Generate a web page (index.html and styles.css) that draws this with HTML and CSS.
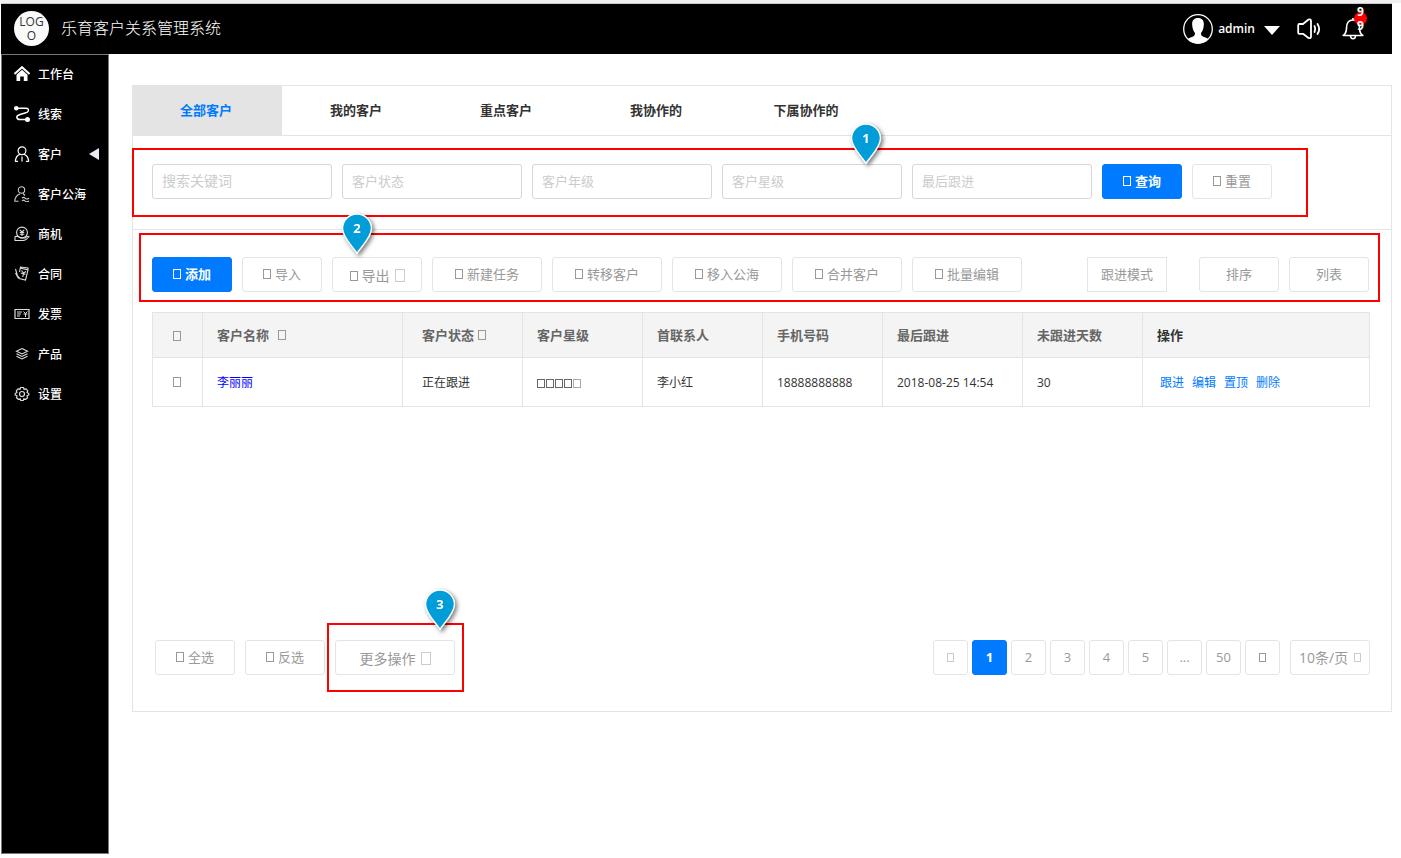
FILE: index.html
```html
<!DOCTYPE html>
<html lang="zh-CN">
<head>
<meta charset="utf-8">
<title>乐育客户关系管理系统</title>
<link rel="stylesheet" href="styles.css">
</head>
<body>
<svg class="defs" aria-hidden="true">
  <symbol id="pin" viewBox="0 0 32 42">
    <path d="M16 40.500 C13.500 35.500 1.500 25 1.500 15.500 A14.500 14.500 0 0 1 30.500 15.500 C30.500 25 18.500 35.500 16 40.500 Z" fill="#009dd9" stroke="#fff" stroke-width="1.500"/>
  </symbol>
</svg>

<header class="topbar">
  <span class="logo">LOGO</span>
  <h1 class="title">乐育客户关系管理系统</h1>
  <div class="userbar">
    <button class="user" type="button">
      <svg width="30" height="30" viewBox="0 0 30 30"><circle cx="15" cy="15" r="14.300" fill="#000" stroke="#fff" stroke-width="1.300"/><path d="M15 4 C10.500 4 8.800 7 9.200 11 C9.400 15 10.800 17.500 12 19 C12 21 11.500 22.200 9 23 C7 23.700 5.500 24.200 4.600 25 A14.300 14.300 0 0 0 25.400 25 C24.500 24.200 23 23.700 21 23 C18.500 22.200 18 21 18 19 C19.200 17.500 20.600 15 20.800 11 C21.200 7 19.500 4 15 4 Z" fill="#fff"/></svg>
      <span>admin</span>
      <svg class="caret" width="16" height="9" viewBox="0 0 16 9"><path d="M0 0 H16 L8 9 Z" fill="#fff"/></svg>
    </button>
    <button class="plain" type="button" aria-label="声音">
      <svg width="24" height="22" viewBox="0 0 24 22" fill="none" stroke="#fff" stroke-width="1.800" stroke-linejoin="round" stroke-linecap="round"><path d="M2.300 6 H6 L11.500 1.500 Q14 .8 14 3 V18.500 Q14 20.800 11.500 20 L6 15.800 H2.300 Q1.200 15.800 1.200 14.500 V7.300 Q1.200 6 2.300 6 Z"/><path d="M17.500 8 Q19 11 17.500 14"/><path d="M20.500 6 Q23.800 11 20.500 16"/></svg>
    </button>
    <button class="plain bell" type="button" aria-label="通知">
      <svg width="22" height="24" viewBox="0 0 22 24" fill="none" stroke="#fff" stroke-width="1.600" stroke-linejoin="round"><path d="M11 1 V3 M1.200 18.500 C4 16.500 4.500 14.500 4.500 11 C4.500 6 7 3 11 3 C15 3 17.500 6 17.500 11 C17.500 14.500 18 16.500 20.800 18.500 Z"/><path d="M8.500 19 Q8.800 21.800 11 21.800 Q13.200 21.800 13.500 19"/></svg>
      <span class="badge">99</span>
    </button>
  </div>
</header>

<div class="layout">
  <nav class="sidebar">
    <a href="#"><svg viewBox="0 0 16 16"><path d="M.5 8 L8 1.200 L15.500 8" fill="none" stroke="#fff" stroke-width="2"/><path d="M2.500 8.700 L8 3.800 L13.500 8.700 V15 H9.800 V10.500 H6.200 V15 H2.500 Z" fill="#fff"/></svg>工作台</a>
    <a href="#"><svg viewBox="0 0 16 16" fill="none" stroke="#fff" stroke-width="1.400"><circle cx="2.300" cy="2.300" r="2.300" fill="#fff" stroke="none"/><circle cx="13.500" cy="13.500" r="2.500" fill="#fff" stroke="none"/><path d="M3 2.300 H12 Q15 2.500 14.300 5 Q13.800 6.500 11 7 L6 8.500 Q2.500 9.500 2.800 11.500 Q3.200 13.500 6 13.500 H12"/></svg>线索</a>
    <a href="#" class="current"><svg viewBox="0 0 16 16" fill="none" stroke="#fff" stroke-width="1.200"><circle cx="8" cy="4.800" r="3.900"/><path d="M1.300 15.500 Q1.800 9.500 6 8.300 M14.700 15.500 Q14.200 9.500 10 8.300 M4 15.300 H1.200 M12 15.300 H14.800 M8 10.500 V15.500"/></svg>客户<i class="arrow"></i></a>
    <a href="#"><svg viewBox="0 0 16 16" fill="none" stroke="#ccc" stroke-width="1.100"><circle cx="7.500" cy="4" r="3.200"/><path d="M.8 15.500 Q1 9.500 6 8 M.5 15.300 H4.500 M9 7.500 L11 9.500"/><path d="M8 12.200 Q9.500 10.500 11 12.200 T15 12.200 M8 15 Q9.500 13.300 11 15 T15 15"/></svg>客户公海</a>
    <a href="#"><svg viewBox="0 0 16 16" fill="none" stroke="#ddd" stroke-width="1.100"><circle cx="8" cy="6.500" r="5.400"/><path d="M5.800 4 L8 6 L10.200 4 M5.800 6.500 H10.200 M5.800 8.300 H10.200 M8 6 V10"/><path d="M1 10.500 V14.500 H9 Q12 14.500 15 10.500 Q13.500 9.500 11 12 H6.500 Q5 10 1 10.500"/></svg>商机</a>
    <a href="#"><svg viewBox="0 0 16 16" fill="none" stroke="#ddd" stroke-width="1.100"><path d="M6 2 L14 4 L11.500 14 L5 12.500 M14 4 V2 L6.500 1 L5.500 6"/><path d="M1.500 3 L3.500 10 L5.500 12 M1.500 7 L4.500 12.500 M7.500 4.500 L9.500 7 L12 5.500 M9.500 7 L8.800 11 M6.800 7 L11.500 8.200"/></svg>合同</a>
    <a href="#"><svg viewBox="0 0 16 16" fill="none" stroke="#ddd" stroke-width="1.200"><path d="M1 3.500 H15 V12.500 H1 Z"/><path d="M3 6 H8 M3 8 H7 M3 10 H6 M9.500 5.500 L11.500 7.500 L13.500 5.500 M9.500 8 H13.500 M11.500 7.500 V11" stroke-width="1"/></svg>发票</a>
    <a href="#"><svg viewBox="0 0 16 16" fill="none" stroke="#ddd" stroke-width="1.100"><path d="M8 2.500 L13.500 5.300 L8 8 L2.500 5.300 Z M2.500 7.800 L8 10.500 L13.500 7.800 M2.500 10.300 L8 13 L13.500 10.300"/></svg>产品</a>
    <a href="#"><svg viewBox="0 0 16 16" fill="none" stroke="#ddd" stroke-width="1.200" stroke-linejoin="round"><path d="M6.500 1.500 H9.500 L10 3.300 L12 2.800 L13.800 4.800 L13 6.500 L14.800 7.500 V9 L13 9.800 L13.500 11.800 L11.500 13.500 L9.900 12.700 L9.200 14.500 H6.800 L6.100 12.700 L4.500 13.500 L2.500 11.800 L3 9.800 L1.200 9 V7.500 L3 6.500 L2.200 4.800 L4 2.800 L6 3.300 Z"/><circle cx="8" cy="8" r="2.500"/></svg>设置</a>
  </nav>

  <main class="main">
    <section class="card">
      <div class="tabs" role="tablist">
        <button type="button" role="tab" class="tab active" aria-selected="true">全部客户</button>
        <button type="button" role="tab" class="tab">我的客户</button>
        <button type="button" role="tab" class="tab">重点客户</button>
        <button type="button" role="tab" class="tab">我协作的</button>
        <button type="button" role="tab" class="tab">下属协作的</button>
      </div>

      <form class="search">
        <input class="field keyword" type="text" placeholder="搜索关键词" aria-label="搜索关键词">
        <select class="field" aria-label="客户状态"><option>客户状态</option></select>
        <select class="field" aria-label="客户年级"><option>客户年级</option></select>
        <select class="field" aria-label="客户星级"><option>客户星级</option></select>
        <input class="field" type="text" placeholder="最后跟进" aria-label="最后跟进">
        <button type="button" class="btn primary"><i class="glyph"></i>查询</button>
        <button type="button" class="btn"><i class="glyph"></i>重置</button>
        <div class="mark mark-search"><span class="pin"><svg><use href="#pin"/></svg><b>1</b></span></div>
      </form>

      <div class="toolbar">
        <button type="button" class="btn primary"><i class="glyph"></i>添加</button>
        <button type="button" class="btn"><i class="glyph"></i>导入</button>
        <button type="button" class="btn export"><i class="glyph"></i>导出<i class="glyph big"></i></button>
        <button type="button" class="btn wide"><i class="glyph"></i>新建任务</button>
        <button type="button" class="btn wide"><i class="glyph"></i>转移客户</button>
        <button type="button" class="btn wide"><i class="glyph"></i>移入公海</button>
        <button type="button" class="btn wide"><i class="glyph"></i>合并客户</button>
        <button type="button" class="btn wide"><i class="glyph"></i>批量编辑</button>
        <div class="views">
          <button type="button" class="btn mode">跟进模式</button>
          <button type="button" class="btn">排序</button>
          <button type="button" class="btn">列表</button>
        </div>
        <div class="mark mark-tools"><span class="pin"><svg><use href="#pin"/></svg><b>2</b></span></div>
      </div>

      <div class="table-area">
        <table class="grid">
          <colgroup><col class="c-check"><col class="c-name"><col class="c-std"><col class="c-std"><col class="c-std"><col class="c-std"><col class="c-time"><col class="c-std"><col></colgroup>
          <thead>
            <tr>
              <th class="check"><input type="checkbox" aria-label="全选"></th>
              <th>客户名称<i class="glyph after far"></i></th>
              <th class="status">客户状态<i class="glyph after"></i></th>
              <th>客户星级</th>
              <th>首联系人</th>
              <th>手机号码</th>
              <th>最后跟进</th>
              <th>未跟进天数</th>
              <th class="dark">操作</th>
            </tr>
          </thead>
          <tbody>
            <tr>
              <td class="check"><input type="checkbox" aria-label="选择李丽丽"></td>
              <td><a class="name" href="#">李丽丽</a></td>
              <td class="status">正在跟进</td>
              <td><span class="stars"><i class="glyph"></i><i class="glyph"></i><i class="glyph"></i><i class="glyph"></i><i class="glyph last"></i></span></td>
              <td>李小红</td>
              <td>18888888888</td>
              <td>2018-08-25 14:54</td>
              <td>30</td>
              <td class="ops"><span><a href="#">跟进</a><a href="#">编辑</a><a href="#">置顶</a><a href="#">删除</a></span></td>
            </tr>
          </tbody>
        </table>
      </div>

      <div class="footer">
        <button type="button" class="btn"><i class="glyph"></i>全选</button>
        <button type="button" class="btn"><i class="glyph"></i>反选</button>
        <div class="more-wrap">
          <button type="button" class="btn more">更多操作<i class="glyph big"></i></button>
          <div class="mark mark-more"><span class="pin"><svg><use href="#pin"/></svg><b>3</b></span></div>
        </div>
        <div class="pages">
          <button type="button" class="page" aria-label="上一页"><i class="glyph dim"></i></button>
          <button type="button" class="page on">1</button>
          <button type="button" class="page">2</button>
          <button type="button" class="page">3</button>
          <button type="button" class="page">4</button>
          <button type="button" class="page">5</button>
          <button type="button" class="page">...</button>
          <button type="button" class="page">50</button>
          <button type="button" class="page" aria-label="下一页"><i class="glyph"></i></button>
          <label class="size"><select aria-label="每页条数"><option>10条/页</option></select><i class="glyph dim"></i></label>
        </div>
      </div>
    </section>
  </main>
</div>
</body>
</html>
```

FILE: styles.css
```css
* { box-sizing: border-box; }

body {
  margin: 0;
  padding-left: 1px;
  border-top: 3px solid #f0f0f0;
  background: #fff;
  color: #333;
  font: 12px/18px "Open Sans", "Noto Sans CJK SC", sans-serif;
}

button, input, select { font: inherit; color: inherit; }
button { cursor: pointer; }
a { text-decoration: none; }
.defs { position: absolute; width: 0; height: 0; }

/* Top bar */
.topbar {
  display: flex;
  align-items: center;
  height: 51px;
  margin-right: 9px;
  padding: 0 28px 2px 13px;
  border-top: 1px solid #c8c8c8;
  background: #000;
  color: #fff;
}
.logo {
  width: 35px;
  height: 35px;
  padding: 4px 5px 0;
  border-radius: 50%;
  background: #fafafa;
  color: #333;
  line-height: 14px;
  text-align: center;
  word-break: break-all;
}
.title { margin: 0 0 0 12px; font-size: 16px; font-weight: 300; line-height: 24px; }
.userbar { display: flex; align-items: center; gap: 17px; margin-left: auto; padding-top: 2px; }
.user, .plain {
  display: flex;
  align-items: center;
  padding: 0;
  border: 0;
  background: none;
  color: #fff;
}
.user { gap: 5px; font-weight: 600; }
.caret { margin: 2px 0 0 4px; }
.bell { position: relative; margin-left: 4px; }
.badge {
  position: absolute;
  top: -5px;
  left: 12px;
  display: flex;
  align-items: center;
  width: 13px;
  height: 13px;
  padding: 0 3px;
  border-radius: 50%;
  background: #f00;
  font-size: 12px;
  font-weight: 700;
  line-height: 14px;
  word-break: break-all;
}

/* Side navigation */
.layout { display: flex; align-items: flex-start; }
.sidebar {
  flex: 0 0 108px;
  min-height: calc(100vh - 58px);
  border: 1px solid #797979;
  background: #000;
}
.sidebar a {
  display: flex;
  align-items: center;
  gap: 8px;
  height: 40px;
  padding: 0 9px 0 12px;
  color: #fff;
  font-weight: 500;
}
.sidebar svg { width: 16px; height: 16px; margin-bottom: 2px; }
.arrow {
  margin: 0 0 2px auto;
  border: 6px solid transparent;
  border-right: 10px solid #e8e8f4;
  border-left: 0;
}

/* Card */
.main { flex: 1; min-width: 0; padding: 31px 9px 0 23px; }
.card { border: 1px solid #e4e4e4; }

.tabs { display: flex; border-bottom: 1px solid #e4e4e4; }
.tab {
  width: 150px;
  height: 49px;
  padding: 0 2px 2px 0;
  border: 0;
  background: none;
  font-size: 13px;
  font-weight: 700;
}
.tab.active {
  height: 50px;
  margin: -1px 0 0 -1px;
  padding-bottom: 0;
  background: #e4e4e4;
  color: #007aff;
}

.search {
  position: relative;
  display: flex;
  gap: 10px;
  padding: 28px 83px 30px 19px;
  border-bottom: 1px solid #e4e4e4;
}
.field {
  flex: 0 1 180px;
  min-width: 0;
  height: 35px;
  padding: 0 9px 2px;
  border: 1px solid #d7d7d7;
  border-radius: 3px;
  background: #fff;
  color: #ccc;
  font-size: 13px;
  appearance: none;
}
.field::placeholder { color: #ccc; opacity: 1; }
.keyword { font-size: 14px; }

.btn {
  display: flex;
  align-items: center;
  justify-content: center;
  gap: 4px;
  width: 80px;
  height: 35px;
  padding: 0 0 1px;
  border: 1px solid #e4e4e4;
  border-radius: 3px;
  background: #fff;
  color: #999;
  font-size: 13px;
}
.btn.primary {
  padding-bottom: 2px;
  border-color: #007aff;
  background: #007aff;
  color: #fff;
  font-weight: 700;
}
.btn.wide { width: 110px; }
.btn.export { width: 90px; padding-top: 3px; font-size: 14px; }
.btn.more { width: 120px; padding-top: 3px; font-size: 14px; }
.btn.mode { margin-right: 22px; border-radius: 0; }

.glyph {
  display: inline-block;
  flex: none;
  width: 8px;
  height: 10px;
  border: 1px solid currentColor;
}
.glyph.big { width: 10px; height: 13px; margin-left: 1px; color: #ccc; }
.glyph.dim { color: #ccc; }
.glyph.after { margin-left: 4px; color: #999; }
.glyph.far { margin-left: 9px; }

.toolbar {
  position: relative;
  display: flex;
  gap: 10px;
  padding: 27px 22px 20px 19px;
}
.views { display: flex; gap: 10px; margin-left: auto; }

/* Table */
.table-area { min-height: 328px; padding: 0 21px 0 19px; }
.grid { width: 100%; border-collapse: collapse; table-layout: fixed; }
.c-check { width: 50px; }
.c-name { width: 200px; }
.c-std { width: 120px; }
.c-time { width: 140px; }
.grid th, .grid td {
  padding: 0 0 0 14px;
  border: 1px solid #e4e4e4;
  text-align: left;
  white-space: nowrap;
}
.grid th { height: 45px; background: #f4f4f4; color: #666; font-size: 13px; font-weight: 700; }
.grid td { height: 49px; padding-top: 2px; }
.grid .check { padding: 0 2px 2px 0; text-align: center; }
.grid .status { padding-left: 19px; }
.grid .dark { color: #333; }
.check input {
  width: 8px;
  height: 10px;
  margin: 0;
  border: 1px solid #999;
  appearance: none;
  vertical-align: middle;
}
.name { color: #00f; }
.stars { display: flex; gap: 1px; color: #666; }
.stars .glyph { height: 9px; }
.stars .last { color: #aaa; }
.grid .ops { padding-left: 17px; }
.ops span { display: flex; gap: 8px; }
.ops a { color: #007aff; }

/* Footer */
.footer { display: flex; gap: 10px; padding: 0 21px 36px 22px; }
.more-wrap { position: relative; }
.pages { display: flex; gap: 4px; margin-left: auto; }
.page {
  width: 35px;
  height: 35px;
  padding: 0 0 2px;
  border: 1px solid #e4e4e4;
  border-radius: 3px;
  background: #fff;
  color: #999;
  font-size: 13px;
}
.page .glyph { width: 7px; height: 9px; }
.page.on { border-color: #007aff; background: #007aff; color: #fff; font-weight: 700; }
.size {
  display: flex;
  align-items: center;
  justify-content: center;
  gap: 5px;
  width: 80px;
  height: 35px;
  margin-left: 6px;
  border: 1px solid #e4e4e4;
  border-radius: 3px;
}
.size select {
  padding: 0;
  border: 0;
  background: none;
  color: #999;
  font-size: 14px;
  appearance: none;
}
.size .glyph { width: 7px; height: 9px; }

/* Numbered callouts over the content */
.mark { position: absolute; border: 2px solid #f00; pointer-events: none; }
.mark-search { inset: 12px 83px 12px -1px; }
.mark-tools { inset: 3px 11px 10px 6px; }
.mark-more { inset: -17px -9px -17px -8px; }
.pin {
  position: absolute;
  width: 32px;
  height: 42px;
  color: #fff;
  text-align: center;
  filter: drop-shadow(2px 2px 2px rgba(0, 0, 0, .5));
}
.pin svg { position: absolute; inset: 0; width: 32px; height: 42px; }
.pin b { position: relative; font-size: 13px; line-height: 31px; }
.mark-search .pin { top: -27px; left: 716px; }
.mark-tools .pin { top: -22px; left: 200px; }
.mark-more .pin { top: -36px; left: 95px; }
```
